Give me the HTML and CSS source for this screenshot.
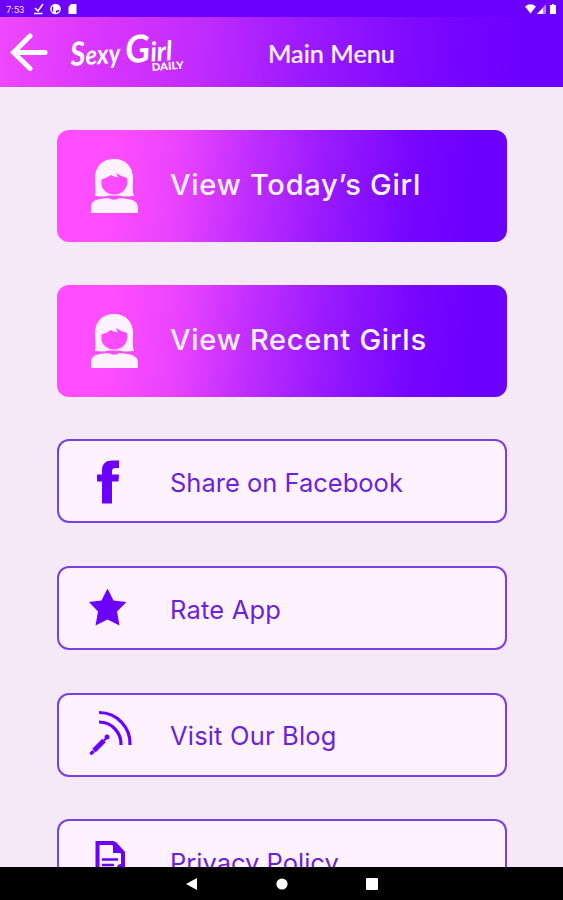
FILE: index.html
```html
<!DOCTYPE html>
<html lang="en">
<head>
<meta charset="utf-8">
<title>Main Menu</title>
<link rel="stylesheet" href="styles.css">
</head>
<body>
<svg class="defs" aria-hidden="true">
  <symbol id="girl" viewBox="0 0 48 56">
    <path fill-rule="evenodd" d="M5 38C6 32 5 26 5 20C5 8 13 1 24 1C36 1 43 9 43 20C43 27 42 32 44 38Q34 39 29 37.500H19Q14 39 5 38ZM12 21C9 29 16 36.500 24 36.500C33 36.500 39 29 37 20Q31 18.500 26 15L28 19.500Q23 18.500 21 17Q17 20 12 21Z"/>
    <path d="M1 55V50C1 44 4 42 10 41L18 40Q24 43.500 30 40L38 41C44 42 48 44 48 50V55Z"/>
  </symbol>
</svg>
<div class="screen">
  <div class="status">
    <span class="time">7:53</span>
    <svg class="status-left" viewBox="0 0 46 12">
      <path class="line" d="M2 5L5 8L10 1M1 10.600H9.500"/>
      <circle class="line" cx="22.500" cy="6" r="4.600"/>
      <path d="M20 2H24.500A2.800 2.800 0 0 1 24.500 7.500H23V10.500H20Z"/>
      <path d="M38 1H43.500V11H35.500V4Z"/>
    </svg>
    <svg class="status-right" viewBox="0 0 34 12">
      <path d="M1 3.500Q6.500 -.8 12 3.500L6.500 10.500Z"/>
      <path class="dim" d="M22 1V11H13Z"/><path d="M19 5V11H13Z"/>
      <path d="M28 1H30V2H32V11H26V2H28Z"/>
    </svg>
  </div>
  <header class="bar">
    <svg class="back" viewBox="0 0 38 38"><path d="M20 3L3.500 19.500L20 35.500M4 19.500H35"/></svg>
    <svg class="logo" viewBox="0 0 118 44">
      <g transform="rotate(-4 2 36)">
        <text class="script" x="1" y="36" textLength="50" lengthAdjust="spacingAndGlyphs"><tspan class="cap">S</tspan>exy</text>
        <text class="script" x="56" y="37" textLength="47" lengthAdjust="spacingAndGlyphs"><tspan class="cap big">G</tspan>irl</text>
      </g>
      <text class="daily" x="82" y="41" transform="rotate(-4 82 41)" textLength="32" lengthAdjust="spacingAndGlyphs">DAILY</text>
    </svg>
    <h1 class="title">Main Menu</h1>
  </header>
  <main class="menu">
    <a class="item primary"><svg class="icon girl"><use href="#girl"/></svg><span>View Today’s Girl</span></a>
    <a class="item primary"><svg class="icon girl"><use href="#girl"/></svg><span>View Recent Girls</span></a>
    <a class="item"><svg class="icon" viewBox="0 0 48 48"><path d="M12 46.500V24.500H7V17.500H12V13.500C12 6.500 16 3.500 22 3.500H29V11H25Q22 11 22 14.500V17.500H29L28.500 24.500H22V46.500Z"/></svg><span>Share on Facebook</span></a>
    <a class="item"><svg class="icon" viewBox="0 0 48 48"><path d="M17.500 4.500L23.500 16.500L36.500 18L27 27.500L29.500 41.500L17.500 35.500L5.500 41.500L8 27.500L-1 18L11.500 16.500Z"/></svg><span class="wide">Rate App</span></a>
    <a class="item"><svg class="icon" viewBox="0 0 48 48"><path class="arc" d="M9 1.500A31 31 0 0 1 40 34M9 11A22 22 0 0 1 31 34"/><path d="M0 41L3 39L5 41L2 44Q-1 44 0 41Z"/><path class="stem" d="M4 39.500L14 29.500"/><path class="tip" d="M14 29.500L16 27.500"/><circle cx="17" cy="26" r="2.500"/></svg><span class="wide">Visit Our Blog</span></a>
    <a class="item"><svg class="icon" viewBox="0 0 48 48"><path class="page" d="M7.500 48V6H23L33 16V42"/><path d="M23 5H26L35 15V16H23Z"/><path class="rule" d="M12 22.500H28M12 28H24"/><circle cx="31" cy="31" r="4"/></svg><span>Privacy Policy</span></a>
  </main>
  <nav class="nav">
    <svg viewBox="0 0 12 14"><path d="M11 1V13L0 7Z"/></svg>
    <svg viewBox="0 0 12 14"><circle cx="6" cy="7" r="5.600"/></svg>
    <svg viewBox="0 0 12 14"><rect y="1" width="12" height="12" rx="1"/></svg>
  </nav>
</div>
</body>
</html>
```
FILE: styles.css
```css
* { box-sizing: border-box; }
body { margin: 0; background: #f6e9f7; }
.defs { display: none; }
.screen { width: 563px; height: 900px; display: flex; flex-direction: column; overflow: hidden; }
.status { flex: none; height: 17px; padding: 0 5px 0 6px; display: flex; align-items: center; background: #6c00ff; color: #fff; }
.time { font: 9.500px Roboto, sans-serif; width: 27px; padding-top: 1px; opacity: .9; }
.status svg { height: 12px; fill: #fff; margin-top: 1px; }
.status-left { width: 46px; }
.status .status-right { width: 34px; margin-left: auto; }
.dim { opacity: .5; }
.line { fill: none; stroke: #fff; stroke-width: 1.500; }
.bar { flex: none; height: 70px; display: flex; align-items: center; padding-left: 10px; background: linear-gradient(95deg, #f047ff 0%, #d936ff 18%, #c02bff 36%, #9a19ff 55%, #7c08ff 75%, #6c00ff 92%); }
.back { width: 38px; height: 38px; fill: none; stroke: #fff; stroke-width: 5; stroke-linecap: round; }
.logo { width: 118px; height: 44px; margin-left: 22px; overflow: visible; fill: #fff; }
.script { font: italic 700 27px Lato, sans-serif; }
.cap { font-size: 33px; }
.big { font-size: 38px; }
.daily { font: 900 10.500px Lato, sans-serif; }
.title { margin: 2px 0 0 80px; font: 500 25.200px Lato, sans-serif; color: #fdf0ff; -webkit-text-stroke: .2px #fdf0ff; }
.menu { flex: 1; min-height: 0; overflow: hidden; padding: 43px 56px 0 57px; display: flex; flex-direction: column; gap: 42.700px; }
.item { flex: none; height: 84px; display: flex; align-items: center; padding-left: 31px; border: 2px solid #7840e6; border-radius: 12px; background: #fef2ff; color: #6b1fe0; font: 25.500px Inter, sans-serif; white-space: nowrap; }
.item span { margin-left: 32px; padding-top: 2px; }
.item .wide { letter-spacing: .18px; }
.item.primary { height: 112px; border: 0; padding-left: 33px; background: linear-gradient(97deg, #ff4dff 12%, #e842ff 28%, #bd2cff 44%, #9518ff 61%, #7706ff 78%, #6c00ff 90%); color: #fef2ff; font-size: 29px; font-weight: 500; letter-spacing: .75px; }
.item.primary span { padding: 0; margin-top: -3px; }
.icon { width: 48px; height: 48px; fill: #6c00ff; overflow: visible; }
.icon.girl { height: 56px; fill: #fef2ff; }
.arc, .stem, .page, .rule, .tip { fill: none; stroke: #6c00ff; }
.arc { stroke-width: 3.200; }
.stem { stroke-width: 5; }
.tip { stroke-width: 2; }
.page { stroke-width: 4; }
.rule { stroke-width: 2.500; }
.nav { flex: none; height: 33px; background: #000; display: flex; justify-content: center; align-items: center; gap: 78px; }
.nav svg { width: 12px; height: 14px; fill: #fff; }
```
